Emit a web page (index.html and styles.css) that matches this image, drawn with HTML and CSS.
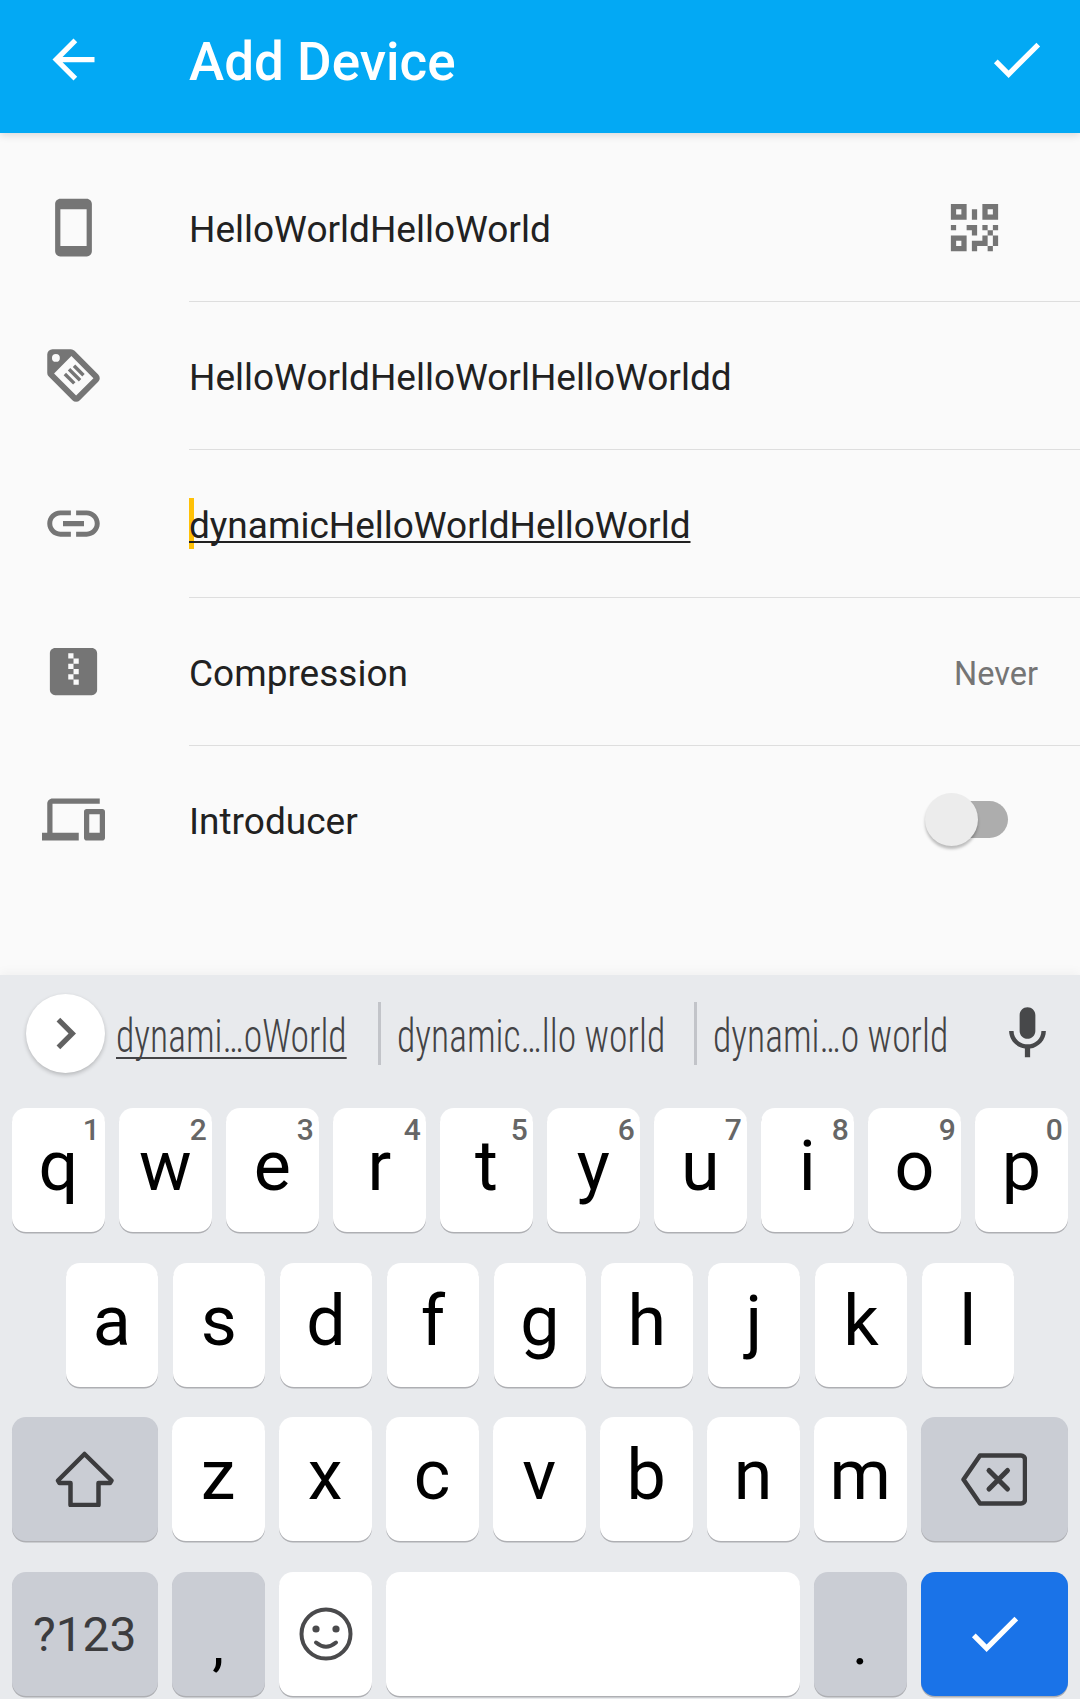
FILE: index.html
```html
<!DOCTYPE html>
<html lang="en">
<head>
    <meta charset="UTF-8">
    <meta name="viewport" content="width=device-width, initial-scale=1" />
    <title>Add Device</title>
    <link rel="stylesheet" href="styles.css">
</head>
<body>
    <header class="toolbar">
        <svg class="icon" viewBox="0 0 24 24"><path d="M20 11H7.83l5.59-5.59L12 4l-8 8 8 8 1.41-1.41L7.83 13H20v-2z"/></svg>
        <h1 class="toolbar-title">Add Device</h1>
        <svg class="icon" viewBox="0 0 24 24"><path d="M9 16.17L4.83 12l-1.42 1.41L9 19 21 7l-1.41-1.41z"/></svg>
    </header>

    <main class="form">
        <div class="row">
            <svg class="icon row-icon" viewBox="0 0 24 24"><path d="M17 1.01L7 1c-1.1 0-2 .9-2 2v18c0 1.1.9 2 2 2h10c1.1 0 2-.9 2-2V3c0-1.1-.9-1.99-2-1.99zM17 19H7V5h10v14z"/></svg>
            <div class="row-body">
                <span class="row-text">HelloWorldHelloWorld</span>
                <svg class="icon qr-icon" viewBox="0 0 24 24"><path d="M3 11H5V13H3V11M11 5H13V9H11V5M9 11H13V15H11V13H9V11M15 11H17V13H19V11H21V13H19V15H21V19H19V21H17V19H13V21H11V17H15V15H17V13H15V11M19 19V15H17V19H19M15 3H21V9H15V3M17 5V7H19V5H17M3 3H9V9H3V3M5 5V7H7V5H5M3 15H9V21H3V15M5 17V19H7V17H5Z"/></svg>
            </div>
        </div>
        <div class="row">
            <svg class="icon row-icon" viewBox="0 0 24 24">
                <path fill-rule="evenodd" d="M21.41 11.58L12.41 2.58A2 2 0 0 0 11 2H4A2 2 0 0 0 2 4V11A2 2 0 0 0 2.59 12.42L11.59 21.42A2 2 0 0 0 13 22A2 2 0 0 0 14.41 21.41L21.41 14.41A2 2 0 0 0 22 13A2 2 0 0 0 21.41 11.58ZM11.200 4.600L19.600 13L13 19.600L4.600 11.200ZM5.300 3.800A1.500 1.500 0 1 1 5.300 6.800A1.500 1.500 0 1 1 5.300 3.800Z"/>
                <path class="tag-lines" d="M8.700 11.400L12.300 15M10.300 9.600L14.500 13.800M12.200 8.300L15.800 11.900"/>
            </svg>
            <div class="row-body">
                <span class="row-text">HelloWorldHelloWorlHelloWorldd</span>
            </div>
        </div>
        <div class="row">
            <svg class="icon row-icon" viewBox="0 0 24 24"><path d="M3.9 12c0-1.71 1.39-3.1 3.1-3.1h4V7H7c-2.76 0-5 2.24-5 5s2.24 5 5 5h4v-1.9H7c-1.71 0-3.1-1.39-3.1-3.1zM8 13h8v-2H8v2zm9-6h-4v1.9h4c1.71 0 3.1 1.39 3.1 3.1s-1.39 3.1-3.1 3.1h-4V17h4c2.76 0 5-2.24 5-5s-2.24-5-5-5z"/></svg>
            <div class="row-body">
                <span class="row-text composing"><span class="caret"></span>dynamicHelloWorldHelloWorld</span>
            </div>
        </div>
        <div class="row">
            <svg class="icon row-icon" viewBox="0 0 24 24"><path d="M14 17H12V15H10V13H12V15H14M14 9H12V11H14V13H12V11H10V9H12V7H10V5H12V7H14M19 3H5C3.89 3 3 3.89 3 5V19A2 2 0 0 0 5 21H19A2 2 0 0 0 21 19V5C21 3.89 20.1 3 19 3Z"/></svg>
            <div class="row-body">
                <span class="row-text">Compression</span>
                <span class="row-value">Never</span>
            </div>
        </div>
        <div class="row row-last">
            <svg class="icon row-icon" viewBox="0 0 24 24"><path d="M4 6h18V4H4c-1.1 0-2 .9-2 2v11H0v3h14v-3H4V6zm19 2h-6c-.55 0-1 .45-1 1v10c0 .55.45 1 1 1h6c.55 0 1-.45 1-1V9c0-.55-.45-1-1-1zm-1 9h-4v-7h4v7z"/></svg>
            <div class="row-body">
                <span class="row-text">Introducer</span>
                <div class="toggle"><span class="toggle-thumb"></span></div>
            </div>
        </div>
    </main>

    <section class="keyboard">
        <div class="strip">
            <div class="strip-more">
                <svg class="icon chevron" viewBox="0 0 24 24"><path d="M10 6L8.59 7.41 13.17 12l-4.58 4.59L10 18l6-6z"/></svg>
            </div>
            <div class="suggestion s1"><span class="word current">dynami…oWorld</span></div>
            <div class="suggestion s2"><span class="word">dynamic…llo world</span></div>
            <div class="suggestion s3"><span class="word">dynami…o world</span></div>
            <svg class="icon mic" viewBox="0 0 24 24"><path d="M12 14c1.66 0 2.99-1.34 2.99-3L15 5c0-1.66-1.34-3-3-3S9 3.34 9 5v6c0 1.66 1.34 3 3 3zm5.3-3c0 3-2.54 5.1-5.3 5.1S6.7 14 6.7 11H5c0 3.41 2.72 6.23 6 6.72V21h2v-3.28c3.28-.48 6-3.3 6-6.72h-1.7z"/></svg>
        </div>

        <div class="key-row">
            <div class="key">q<sup class="hint">1</sup></div>
            <div class="key">w<sup class="hint">2</sup></div>
            <div class="key">e<sup class="hint">3</sup></div>
            <div class="key">r<sup class="hint">4</sup></div>
            <div class="key">t<sup class="hint">5</sup></div>
            <div class="key">y<sup class="hint">6</sup></div>
            <div class="key">u<sup class="hint">7</sup></div>
            <div class="key">i<sup class="hint">8</sup></div>
            <div class="key">o<sup class="hint">9</sup></div>
            <div class="key">p<sup class="hint">0</sup></div>
        </div>
        <div class="key-row key-row-home">
            <div class="key">a</div>
            <div class="key">s</div>
            <div class="key">d</div>
            <div class="key">f</div>
            <div class="key">g</div>
            <div class="key">h</div>
            <div class="key">j</div>
            <div class="key">k</div>
            <div class="key">l</div>
        </div>
        <div class="key-row">
            <div class="key key-wide key-fn key-icon">
                <svg class="shift-icon" viewBox="0 0 60 56"><path d="M29.500 3L3 29.500L4.500 32H15.500V54H43.500V32H55L56.500 29.500Z"/></svg>
            </div>
            <div class="key">z</div>
            <div class="key">x</div>
            <div class="key">c</div>
            <div class="key">v</div>
            <div class="key">b</div>
            <div class="key">n</div>
            <div class="key">m</div>
            <div class="key key-wide key-fn key-icon">
                <svg class="backspace-icon" viewBox="0 0 66 53"><path d="M19 2.500H60A4 4 0 0 1 64 6.500V46.500A4 4 0 0 1 60 50.500H19L2.500 26.500Z"/><path class="backspace-x" d="M28 17.500L46.500 36M46.500 17.500L28 36"/></svg>
            </div>
        </div>
        <div class="key-row">
            <div class="key key-wide key-fn key-symbols">?123</div>
            <div class="key key-fn key-punct">,</div>
            <div class="key key-icon">
                <svg class="emoji-icon" viewBox="0 0 54 54">
                    <circle class="emoji-face" cx="27" cy="27" r="24.500"/>
                    <circle cx="17" cy="22" r="3.600"/>
                    <circle cx="37" cy="22" r="3.600"/>
                    <path class="emoji-face" d="M17 35.500Q27 44 37 35.500"/>
                </svg>
            </div>
            <div class="key key-space"></div>
            <div class="key key-fn key-punct">.</div>
            <div class="key key-wide key-enter key-icon">
                <svg class="icon" viewBox="0 0 24 24"><path d="M9 16.17L4.83 12l-1.42 1.41L9 19 21 7l-1.41-1.41z"/></svg>
            </div>
        </div>
    </section>
</body>
</html>
```

FILE: styles.css
```css
* {
    box-sizing: border-box;
}

body {
    font-family: Roboto, sans-serif;
    margin: 0;
    padding: 0;
    height: 1699px;
    overflow: hidden;
    background-color: #fafafa;
    color: #212121;
    display: flex;
    flex-direction: column;
}

.icon {
    display: block;
    width: 63px;
    height: 63px;
    flex: none;
    fill: #757575;
}

.toolbar {
    position: relative;
    height: 133px;
    padding: 0 32px 15px 42px;
    background-color: #03a9f4;
    box-shadow: 0 2px 8px rgba(0, 0, 0, 0.14);
    display: flex;
    align-items: center;
}

.toolbar .icon {
    fill: #fff;
}

.toolbar-title {
    flex: 1;
    margin: 0 0 0 84px;
    padding-top: 6px;
    font-size: 53px;
    font-weight: 500;
    color: #fff;
}

.form {
    flex: 1;
    padding-top: 21px;
}

.row {
    height: 148px;
    display: flex;
    align-items: center;
}

.row-icon {
    margin: -1px 84px 0 42px;
}

.row-body {
    flex: 1;
    height: 100%;
    border-bottom: 1px solid #dedede;
    padding-right: 42px;
    display: flex;
    align-items: center;
    justify-content: space-between;
}

.row-last .row-body {
    border-bottom-color: transparent;
}

.row-text {
    padding-top: 4px;
    font-size: 37px;
}

.row-value {
    padding-top: 5px;
    font-size: 32.5px;
    color: #757575;
}

.qr-icon {
    margin-right: 32px;
}

.composing {
    position: relative;
    text-decoration: underline;
    text-decoration-thickness: 2px;
    text-underline-offset: 3px;
    text-decoration-skip-ink: none;
}

.caret {
    position: absolute;
    left: 0;
    top: -2px;
    width: 5px;
    height: 51px;
    background-color: #ffc107;
    z-index: -1;
}

.tag-lines {
    fill: none;
    stroke: #757575;
    stroke-width: 1.3;
}

.toggle {
    position: relative;
    width: 63px;
    height: 37px;
    margin-right: 30px;
    border-radius: 19px;
    background-color: #adadad;
}

.toggle-thumb {
    position: absolute;
    left: -20px;
    top: -8px;
    width: 53px;
    height: 53px;
    border-radius: 50%;
    background-color: #ececec;
    box-shadow: 0 3px 3px rgba(0, 0, 0, 0.25);
}

.keyboard {
    position: relative;
    height: 724px;
    padding: 0 12px;
    background-color: #e8eaed;
    box-shadow: 0 -3px 10px rgba(0, 0, 0, 0.04);
}

.strip {
    height: 116px;
    margin: 0 -12px 17px;
    display: flex;
    align-items: center;
}

.strip-more {
    width: 79px;
    height: 79px;
    margin-left: 26px;
    border-radius: 50%;
    background-color: #fff;
    box-shadow: 0 2px 4px rgba(0, 0, 0, 0.22);
    display: flex;
    align-items: center;
    justify-content: center;
}

.chevron {
    fill: #616161;
}

.suggestion {
    height: 63px;
    font-size: 47px;
    font-weight: 300;
    font-stretch: 75%;
    color: #434345;
    display: flex;
    align-items: center;
    white-space: nowrap;
}

/* the strip squeezes long words harder than the condensed face does */
.word {
    margin-top: 4px;
    transform: scaleX(0.8);
    transform-origin: left center;
}

.s1 {
    width: 273px;
    padding-left: 11px;
}

.s2 {
    width: 316px;
    padding-left: 16px;
    border-left: 3px solid #c2c4c9;
}

.s3 {
    width: 302px;
    padding-left: 16px;
    border-left: 3px solid #c2c4c9;
}

.current {
    text-decoration: underline;
    text-decoration-thickness: 2px;
    text-decoration-skip-ink: none;
    text-underline-offset: 5px;
}

.mic {
    fill: #47484a;
}

.key-row {
    display: flex;
    gap: 14.25px;
    margin-bottom: 30.5px;
}

.key-row-home {
    padding-left: 53.5px;
}

.key {
    position: relative;
    flex: 0 0 92.75px;
    height: 124px;
    padding-bottom: 8px;
    border-radius: 14px;
    background-color: #fff;
    box-shadow: 0 1.5px 0 #aeafb3;
    color: #000;
    font-size: 70px;
    display: flex;
    align-items: center;
    justify-content: center;
}

.key-wide {
    flex-basis: 145.5px;
}

.key-wide:last-child {
    flex: 1;
}

.key-space {
    flex-basis: 413.75px;
}

.key-fn {
    background-color: #cacdd4;
}

.key-enter {
    background-color: #1a73e8;
}

.key-enter .icon {
    fill: #fff;
}

.key-icon {
    padding-bottom: 0;
}

.hint {
    position: absolute;
    top: 2px;
    right: 5px;
    font-size: 30px;
    font-weight: 500;
    line-height: 40px;
    color: #666;
}

.key-symbols {
    font-size: 48px;
    color: #3c3c3e;
    padding: 2px 0 0;
}

.key-punct {
    font-size: 60px;
    padding-bottom: 0;
    padding-top: 20px;
}

.shift-icon {
    width: 60px;
    height: 56px;
    fill: none;
    stroke: #3c3c3e;
    stroke-width: 4.5;
    stroke-linejoin: round;
}

.backspace-icon {
    width: 66px;
    height: 53px;
    fill: none;
    stroke: #3c3c3e;
    stroke-width: 4.5;
    stroke-linejoin: round;
    stroke-linecap: round;
}

.backspace-x {
    stroke-width: 5;
}

.emoji-icon {
    width: 54px;
    height: 54px;
    margin-left: 2px;
    fill: #4a4a4c;
}

.emoji-face {
    fill: none;
    stroke: #4a4a4c;
    stroke-width: 4;
    stroke-linecap: round;
}
```
